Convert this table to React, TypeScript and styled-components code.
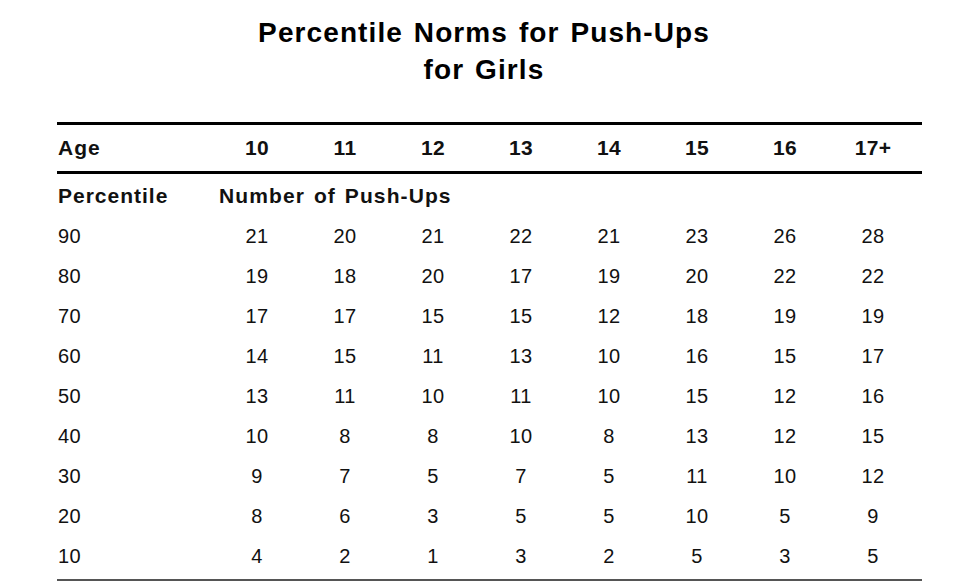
import styled, { createGlobalStyle } from "styled-components";

const GlobalStyle = createGlobalStyle`
  html, body {
    margin: 0;
    padding: 0;
    background: #ffffff;
  }
  body {
    font-family: "Liberation Sans", Arial, sans-serif;
    color: #111;
  }
`;

const Page = styled.div`
  width: 968px;
  padding-top: 14px;
`;

const Title = styled.h1`
  margin: 0;
  text-align: center;
  font-size: 28px;
  line-height: 37px;
  font-weight: 700;
  letter-spacing: 1.1px;
  word-spacing: 2px;
  color: #000;
`;

const Table = styled.div`
  margin: 34px 0 0 57px;
  width: 865px;
  border-top: 3px solid #000;
  border-bottom: 2px solid #555;
`;

const Row = styled.div<{ $height: number; $rule?: boolean; $pad?: number }>`
  display: grid;
  grid-template-columns: 156px repeat(8, 88px);
  align-items: center;
  height: ${(p) => p.$height}px;
  padding-top: ${(p) => p.$pad ?? 0}px;
  box-sizing: border-box;
  border-bottom: ${(p) => (p.$rule ? "3px solid #000" : "none")};
  font-size: 20px;
`;

const Label = styled.div<{ $bold?: boolean }>`
  font-weight: ${(p) => (p.$bold ? 700 : 400)};
  font-size: ${(p) => (p.$bold ? 21 : 20)}px;
  letter-spacing: ${(p) => (p.$bold ? "1px" : "0.3px")};
  padding-left: 1px;
  white-space: nowrap;
`;

const Cell = styled.div<{ $bold?: boolean }>`
  text-align: center;
  font-weight: ${(p) => (p.$bold ? 700 : 400)};
  font-size: ${(p) => (p.$bold ? 21 : 20)}px;
  letter-spacing: 0.3px;
`;

const Span = styled.div`
  grid-column: 2 / 10;
  font-size: 21px;
  font-weight: 700;
  letter-spacing: 1.1px;
  word-spacing: 2px;
  padding-left: 6px;
`;

const Tail = styled.div`
  height: 3px;
`;

const ages = ["10", "11", "12", "13", "14", "15", "16", "17+"];

const rows: [string, number[]][] = [
  ["90", [21, 20, 21, 22, 21, 23, 26, 28]],
  ["80", [19, 18, 20, 17, 19, 20, 22, 22]],
  ["70", [17, 17, 15, 15, 12, 18, 19, 19]],
  ["60", [14, 15, 11, 13, 10, 16, 15, 17]],
  ["50", [13, 11, 10, 11, 10, 15, 12, 16]],
  ["40", [10, 8, 8, 10, 8, 13, 12, 15]],
  ["30", [9, 7, 5, 7, 5, 11, 10, 12]],
  ["20", [8, 6, 3, 5, 5, 10, 5, 9]],
  ["10", [4, 2, 1, 3, 2, 5, 3, 5]],
];

export default function App() {
  return (
    <Page>
      <GlobalStyle />
      <Title>
        Percentile Norms for Push-Ups
        <br />
        for Girls
      </Title>
      <Table>
        <Row $height={49} $rule>
          <Label $bold>Age</Label>
          {ages.map((a) => (
            <Cell key={a} $bold>
              {a}
            </Cell>
          ))}
        </Row>
        <Row $height={42} $pad={2}>
          <Label $bold>Percentile</Label>
          <Span>Number of Push-Ups</Span>
        </Row>
        {rows.map(([pct, vals]) => (
          <Row key={pct} $height={40}>
            <Label>{pct}</Label>
            {vals.map((v, i) => (
              <Cell key={i}>{v}</Cell>
            ))}
          </Row>
        ))}
        <Tail />
      </Table>
    </Page>
  );
}
